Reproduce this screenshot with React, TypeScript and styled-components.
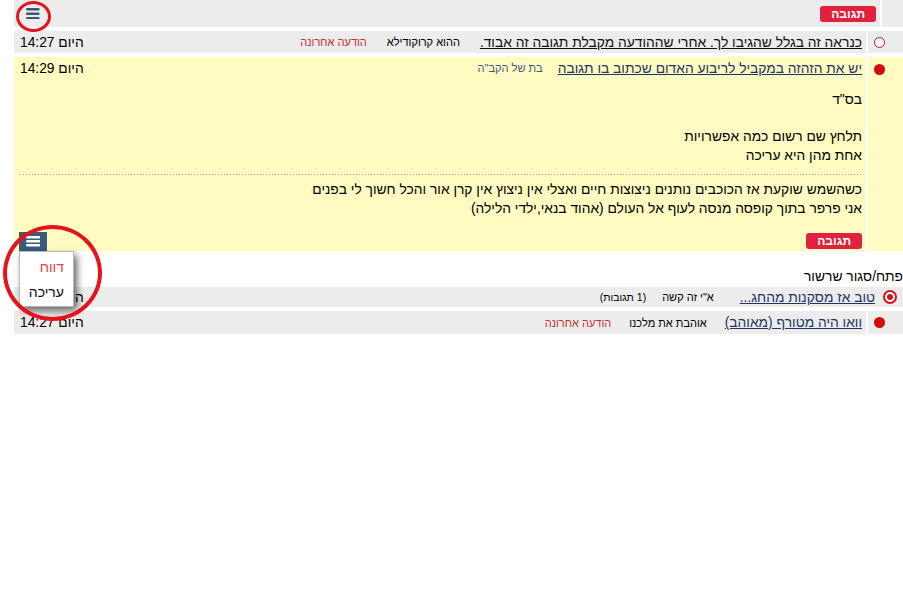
import React from 'react';
import styled, { createGlobalStyle } from 'styled-components';

const Global = createGlobalStyle`
  html, body { margin: 0; padding: 0; background: #fff; overflow: hidden; }
  body {
    font-family: "Liberation Sans", Arial, "DejaVu Sans", sans-serif;
    font-size: 13.8px;
    color: #000;
  }
`;

const Page = styled.div`
  position: relative;
  width: 903px;
  height: 614px;
  padding-left: 14px;
  box-sizing: border-box;
  direction: rtl;
`;

const Row = styled.div<{ $h?: number; $mt?: number }>`
  display: flex;
  gap: 2px;
  height: ${(p) => (p.$h ? `${p.$h}px` : 'auto')};
  margin-top: ${(p) => p.$mt ?? 0}px;
`;

const IconCell = styled.div<{ $w: number; $bg: string; $pt?: number }>`
  flex: none;
  width: ${(p) => p.$w}px;
  box-sizing: border-box;
  background: ${(p) => p.$bg};
  display: flex;
  align-items: ${(p) => (p.$pt !== undefined ? 'flex-start' : 'center')};
  padding-top: ${(p) => p.$pt ?? 0}px;
  padding-right: 18px;
`;

const MainCell = styled.div<{ $bg: string; $gap?: number }>`
  flex: 1;
  min-width: 0;
  background: ${(p) => p.$bg};
  display: flex;
  align-items: center;
  gap: ${(p) => p.$gap ?? 18}px;
  padding: 0 4px 0 6px;
  white-space: nowrap;
`;

const Block = styled.div`
  flex: 1;
  min-width: 0;
  background: #fffbc1;
  padding: 0 4px 2px 6px;
  display: flex;
  flex-direction: column;
`;

const HeadLine = styled.div`
  height: 22px;
  display: flex;
  align-items: center;
  gap: 15px;
  white-space: nowrap;
`;

const TopBar = styled.div`
  flex: 1;
  background: #ececec;
  display: flex;
  align-items: center;
  justify-content: space-between;
  padding: 0 4px 0 12px;
`;

const TopSide = styled.div`
  flex: none;
  width: 21px;
  background: #ececec;
`;

const TitleLink = styled.a<{ $c?: string }>`
  color: ${(p) => p.$c ?? '#1f3566'};
  text-decoration: underline;
  font-size: 13.8px;
  cursor: pointer;
`;

const Small = styled.span<{ $c?: string; $ml?: number; $fs?: number }>`
  font-size: ${(p) => p.$fs ?? 11}px;
  color: ${(p) => p.$c ?? '#000'};
  margin-left: ${(p) => p.$ml ?? 0}px;
`;

const DateText = styled.span`
  margin-right: auto;
  font-size: 13.8px;
`;

const ReplyButton = styled.button`
  font-family: inherit;
  font-size: 12px;
  font-weight: bold;
  color: #fff;
  background: #e0223e;
  border: none;
  border-radius: 3px;
  height: 16px;
  padding: 0 11px;
  line-height: 16px;
  cursor: pointer;
`;

const BodyText = styled.div<{ $mt: number }>`
  margin-top: ${(p) => p.$mt}px;
  line-height: 18.5px;
  font-size: 13.8px;
`;

const Separator = styled.div`
  margin-top: 9px;
  height: 1px;
  background-image: repeating-linear-gradient(
    to right,
    #a8a8a0 0 1px,
    transparent 1px 3px
  );
`;

const ButtonRow = styled.div`
  margin-top: 15px;
  display: flex;
`;

const Toggle = styled.div`
  margin-top: 17px;
  height: 18px;
  line-height: 18px;
  font-size: 13.8px;
`;

const HollowDot = styled.span`
  width: 9px;
  height: 9px;
  border: 1.5px solid #d4131b;
  border-radius: 50%;
  background: #fff;
  display: block;
`;

const FullDot = styled.span`
  width: 11px;
  height: 11px;
  border-radius: 50%;
  background: #d40a0a;
  display: block;
`;

const RingDot = styled.span`
  width: 10px;
  height: 10px;
  border: 2px solid #d4131b;
  border-radius: 50%;
  background: #fff;
  display: flex;
  align-items: center;
  justify-content: center;
  &::after {
    content: '';
    width: 6px;
    height: 6px;
    border-radius: 50%;
    background: #d4131b;
  }
`;

const ThreadCell = styled.div`
  flex: 1;
  background: #ececec;
  display: flex;
  align-items: center;
  gap: 26px;
  padding: 0 6px 0 6px;
  white-space: nowrap;
`;

const RadioSlot = styled.span`
  margin-left: -18px;
  display: flex;
`;

const MenuWrap = styled.div`
  position: absolute;
  left: 19px;
  top: 232px;
  direction: ltr;
`;

const MenuButton = styled.div`
  width: 28px;
  height: 19px;
  background: #3b5b7d;
  display: flex;
  align-items: center;
  justify-content: center;
`;

const MenuList = styled.div`
  width: 55px;
  height: 56px;
  background: #fff;
  border: 1px solid #b8b8b8;
  box-shadow: 3px 4px 7px rgba(0, 0, 0, 0.6);
  display: flex;
  flex-direction: column;
  justify-content: space-around;
  align-items: flex-start;
  padding: 2px 9px 2px 0;
  box-sizing: border-box;
  direction: rtl;
`;

const MenuItem = styled.div<{ $c: string }>`
  color: ${(p) => p.$c};
  font-size: 14px;
  line-height: 18px;
`;

const Ring = styled.div<{ $x: number; $y: number; $w: number; $h: number; $b: number }>`
  position: absolute;
  left: ${(p) => p.$x}px;
  top: ${(p) => p.$y}px;
  width: ${(p) => p.$w}px;
  height: ${(p) => p.$h}px;
  border: ${(p) => p.$b}px solid #e5131b;
  border-radius: 50%;
  box-sizing: border-box;
  pointer-events: none;
`;

const Burger = ({ color, w, gap, t }: { color: string; w: number; gap: number; t: number }) => (
  <svg width={w + t} height={gap * 2 + t} viewBox={`0 0 ${w + t} ${gap * 2 + t}`}>
    {[0, 1, 2].map((i) => (
      <line
        key={i}
        x1={t / 2}
        x2={w + t / 2}
        y1={t / 2 + i * gap}
        y2={t / 2 + i * gap}
        stroke={color}
        strokeWidth={t}
        strokeLinecap="round"
      />
    ))}
  </svg>
);

export default function App() {
  return (
    <>
      <Global />
      <Page>
        <Row $h={27}>
          <TopSide />
          <TopBar>
            <ReplyButton>תגובה</ReplyButton>
            <Burger color="#3d5672" w={11} gap={4.5} t={2.6} />
          </TopBar>
        </Row>

        <Row $h={22} $mt={4}>
          <IconCell $w={35} $bg="#ececec">
            <HollowDot />
          </IconCell>
          <MainCell $bg="#ececec" $gap={20}>
            <TitleLink $c="#111">כנראה זה בגלל שהגיבו לך. אחרי שההודעה מקבלת תגובה זה אבוד.</TitleLink>
            <Small>ההוא קרוקודילא</Small>
            <Small $c="#c8302f">הודעה אחרונה</Small>
            <DateText>היום 14:27</DateText>
          </MainCell>
        </Row>

        <Row $mt={4}>
          <IconCell $w={35} $bg="#fffbc1" $pt={7}>
            <FullDot />
          </IconCell>
          <Block>
            <HeadLine>
              <TitleLink>יש את הזהזה במקביל לריבוע האדום שכתוב בו תגובה</TitleLink>
              <Small $c="#3d5a8c">בת של הקב"ה</Small>
              <DateText>היום 14:29</DateText>
            </HeadLine>
            <BodyText $mt={12}>
              בס"ד
              <br />
              <br />
              תלחץ שם רשום כמה אפשרויות
              <br />
              אחת מהן היא עריכה
            </BodyText>
            <Separator />
            <BodyText $mt={6}>
              כשהשמש שוקעת אז הכוכבים נותנים ניצוצות חיים ואצלי אין ניצוץ אין קרן אור והכל חשוך לי בפנים
              <br />
              אני פרפר בתוך קופסה מנסה לעוף אל העולם (אהוד בנאי,ילדי הלילה)
            </BodyText>
            <ButtonRow>
              <ReplyButton>תגובה</ReplyButton>
            </ButtonRow>
          </Block>
        </Row>

        <Toggle>פתח/סגור שרשור</Toggle>

        <Row $h={20} $mt={1}>
          <ThreadCell>
            <RadioSlot>
              <RingDot />
            </RadioSlot>
            <TitleLink>טוב אז מסקנות מהחג...</TitleLink>
            <Small $ml={-10}>א"י זה קשה</Small>
            <Small $fs={10.5}>(1 תגובות)</Small>
            <DateText>היום 14:27</DateText>
          </ThreadCell>
        </Row>

        <Row $h={23} $mt={4}>
          <IconCell $w={35} $bg="#ececec">
            <FullDot />
          </IconCell>
          <MainCell $bg="#ececec">
            <TitleLink>וואו היה מטורף (מאוהב)</TitleLink>
            <Small>אוהבת את מלכנו</Small>
            <Small $c="#c8302f">הודעה אחרונה</Small>
            <DateText>היום 14:27</DateText>
          </MainCell>
        </Row>

        <MenuWrap>
          <MenuButton>
            <Burger color="#ffffff" w={12} gap={4} t={2.4} />
          </MenuButton>
          <MenuList>
            <MenuItem $c="#e8424a">דווח</MenuItem>
            <MenuItem $c="#111">עריכה</MenuItem>
          </MenuList>
        </MenuWrap>

        <Ring $x={16} $y={1} $w={35} $h={31} $b={3} />
        <Ring $x={3} $y={225} $w={99} $h={96} $b={4} />
      </Page>
    </>
  );
}
